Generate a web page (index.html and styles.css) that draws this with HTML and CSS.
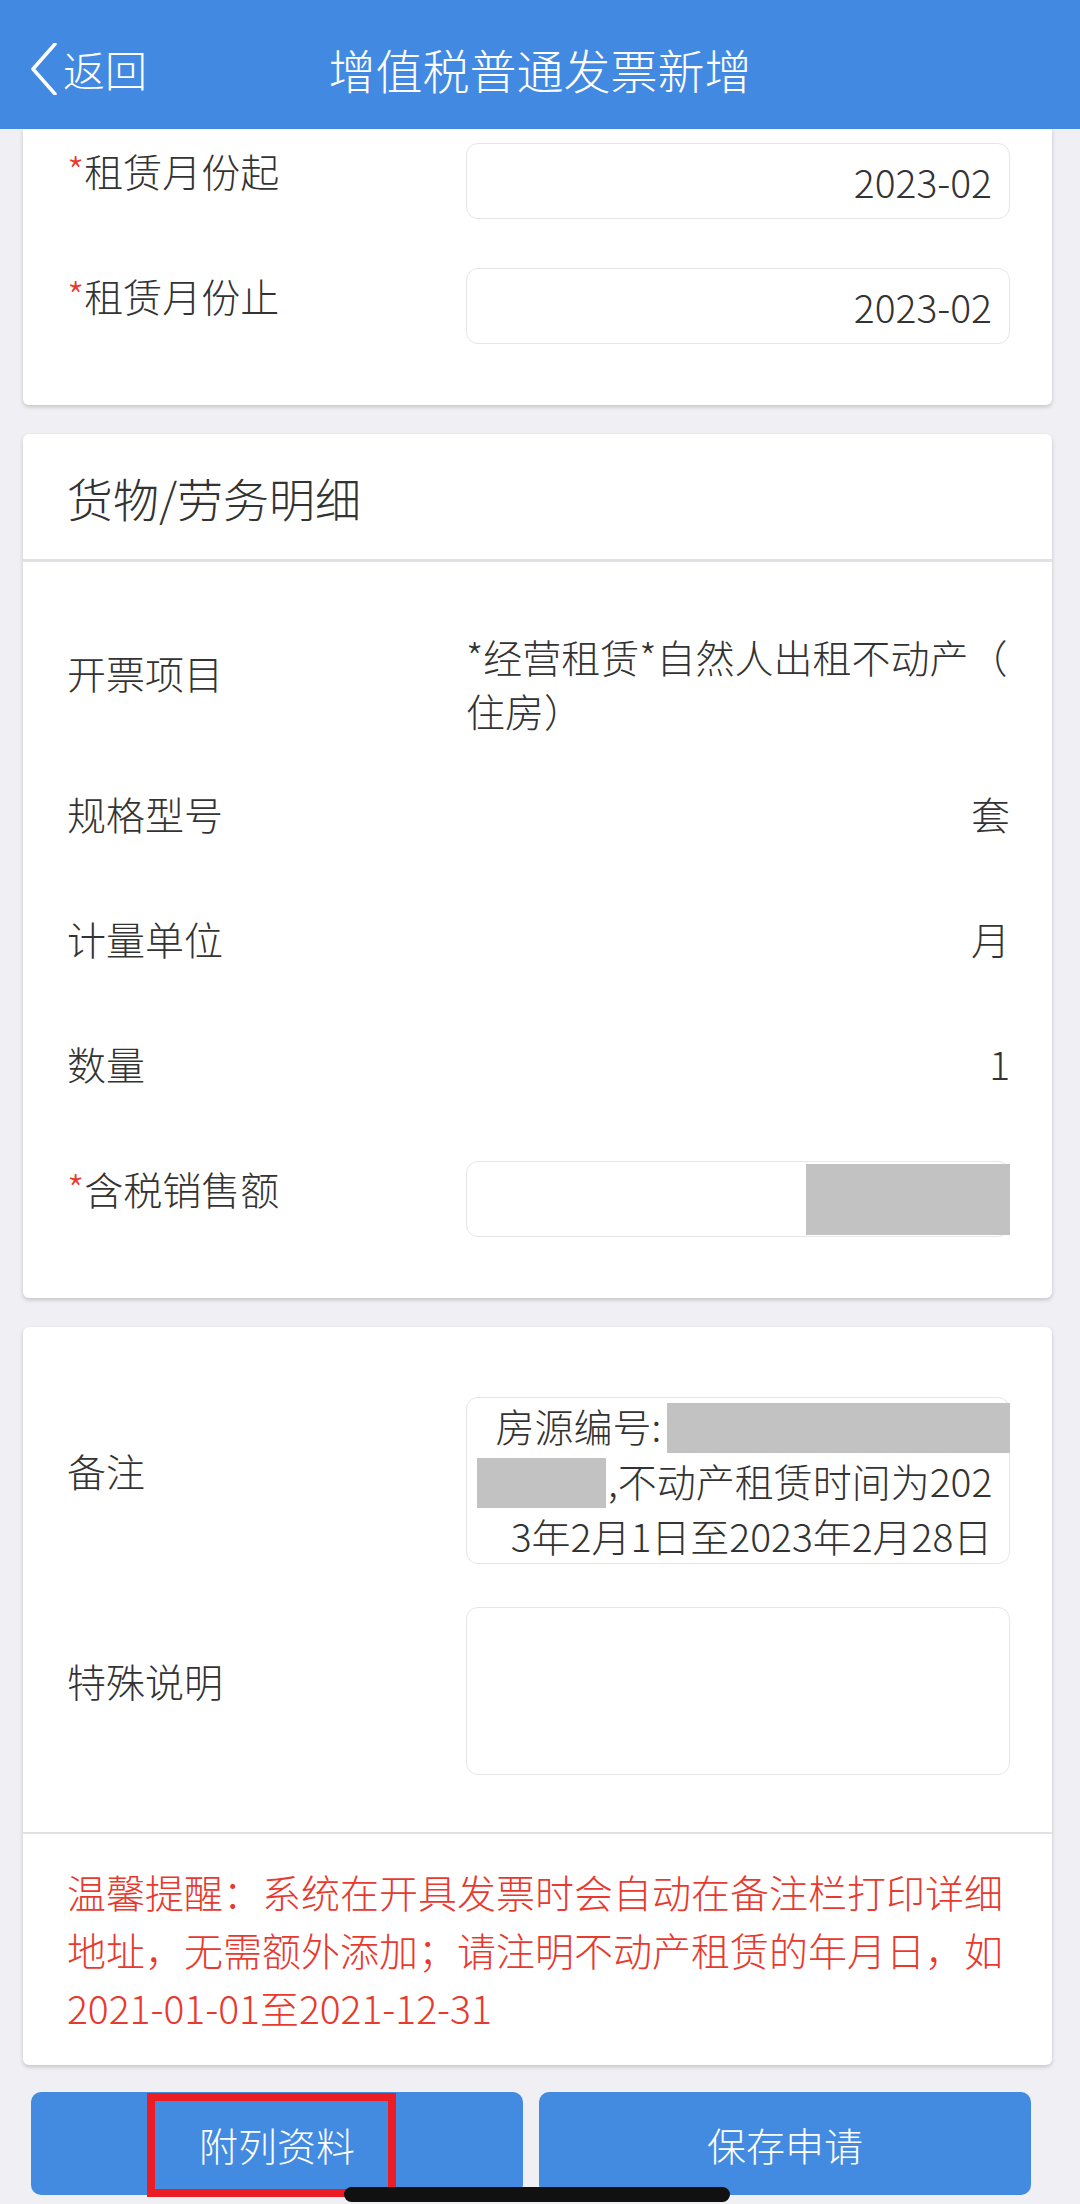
FILE: index.html
```html
<!DOCTYPE html>
<html lang="zh-CN">
<head>
    <meta charset="UTF-8">
    <meta name="viewport" content="width=device-width, initial-scale=1.0">
    <title>增值税普通发票新增</title>
    <link rel="stylesheet" href="styles.css">
</head>
<body>

    <header class="nav-bar">
        <a class="nav-back" href="#">
            <svg viewBox="0 0 26 52"><polyline points="24,1 2,26 24,51" fill="none" stroke="#fff" stroke-width="3.5" stroke-linecap="round" stroke-linejoin="round"/></svg>
            <span>返回</span>
        </a>
        <h1 class="nav-title">增值税普通发票新增</h1>
        <span></span>
    </header>

    <main class="page">
        <section class="card card-top">
            <div class="card-body">
                <div class="row">
                    <span class="cell label"><em class="req">*</em>租赁月份起</span>
                    <div class="field">2023-02</div>
                </div>
                <div class="row">
                    <span class="cell label"><em class="req">*</em>租赁月份止</span>
                    <div class="field">2023-02</div>
                </div>
            </div>
        </section>

        <section class="card">
            <div class="card-head">货物/劳务明细</div>
            <div class="card-body card-body-goods">
                <div class="row">
                    <span class="cell label">开票项目</span>
                    <div class="value-wrap">*经营租赁*自然人出租不动产（<br>住房）</div>
                </div>
                <div class="row">
                    <span class="cell label">规格型号</span>
                    <span class="cell value">套</span>
                </div>
                <div class="row">
                    <span class="cell label">计量单位</span>
                    <span class="cell value">月</span>
                </div>
                <div class="row">
                    <span class="cell label">数量</span>
                    <span class="cell value">1</span>
                </div>
                <div class="row">
                    <span class="cell label"><em class="req">*</em>含税销售额</span>
                    <div class="field"><span class="mask mask-amount"></span></div>
                </div>
            </div>
        </section>

        <section class="card">
            <div class="card-body card-body-notes">
                <div class="row">
                    <span class="cell label">备注</span>
                    <div class="field field-area">
                        <div>房源编号:<span class="mask mask-id"></span></div>
                        <div><span class="mask mask-id2"></span>,不动产租赁时间为202</div>
                        <div>3年2月1日至2023年2月28日</div>
                    </div>
                </div>
                <div class="row">
                    <span class="cell label">特殊说明</span>
                    <div class="field field-area field-empty"></div>
                </div>
            </div>
            <p class="tip">温馨提醒：系统在开具发票时会自动在备注栏打印详细地址，无需额外添加；请注明不动产租赁的年月日，如2021-01-01至2021-12-31</p>
        </section>

        <div class="actions">
            <button class="btn">附列资料</button>
            <button class="btn">保存申请</button>
        </div>
    </main>

    <div class="highlight"></div>
    <div class="home-bar"></div>

</body>
</html>
```

FILE: styles.css
```css
body {
    margin: 0;
    width: 1080px;
    height: 2204px;
    overflow: hidden;
    position: relative;
    background-color: #efeff4;
    font-family: "Noto Sans CJK SC", sans-serif;
    font-size: 39px;
    font-weight: 300;
    color: #333;
}

.nav-bar {
    height: 129px;
    box-sizing: border-box;
    padding-top: 8px;
    background-color: #428ae1;
    color: #fff;
    display: grid;
    grid-template-columns: 1fr auto 1fr;
    align-items: center;
}

.nav-back {
    display: flex;
    align-items: center;
    gap: 6px;
    padding-left: 31px;
    color: #fff;
    text-decoration: none;
    font-size: 42px;
}

.nav-back svg {
    width: 26px;
    height: 52px;
}

.nav-title {
    margin: 0;
    font-size: 47px;
    font-weight: 300;
}

.card {
    background-color: #fff;
    margin: 0 28px 0 23px;
    border-radius: 6px;
    box-shadow: 0 2px 4px rgba(0, 0, 0, 0.18);
}

.card + .card {
    margin-top: 29px;
}

.card-top {
    border-radius: 0 0 6px 6px;
}

.card-head {
    height: 125px;
    display: flex;
    align-items: center;
    padding-left: 44px;
    font-size: 46px;
    border-bottom: 3px solid #e2e2e6;
}

.card-body {
    display: flex;
    flex-direction: column;
    gap: 49px;
    padding: 14px 42px 61px 44px;
}

.card-body-goods {
    padding-top: 67px;
}

.card-body-notes {
    padding-top: 70px;
    padding-bottom: 57px;
    gap: 43px;
    border-bottom: 2px solid #e2e2e6;
}

.row {
    display: flex;
    align-items: center;
}

.cell {
    line-height: 54px;
    padding-bottom: 22px;
}

.label {
    flex: 0 0 399px;
}

.value {
    flex: 1;
    text-align: right;
}

.value-wrap {
    flex: 1;
    line-height: 54px;
    white-space: nowrap;
}

.req {
    font-style: normal;
    color: #e8392e;
}

.field {
    flex: 1;
    height: 76px;
    box-sizing: border-box;
    border: 1px solid #e6e6e8;
    border-radius: 12px;
    display: flex;
    align-items: center;
    justify-content: flex-end;
    padding-right: 17px;
}

.field-area {
    display: block;
    height: 167px;
    padding: 0 17px 0 10px;
    line-height: 55px;
    text-align: right;
    white-space: nowrap;
}

.field-empty {
    height: 168px;
}

.mask {
    display: inline-block;
    vertical-align: top;
    background-color: #c2c2c2;
}

.mask-amount {
    width: 204px;
    height: 71px;
    margin-right: -18px;
}

.mask-id {
    width: 343px;
    height: 50px;
    margin: 5px -18px 0 6px;
}

.mask-id2 {
    width: 129px;
    height: 50px;
    margin: 5px 2px 0 0;
}

.tip {
    margin: 0;
    padding: 28px 42px 29px 44px;
    color: #e8392e;
    line-height: 58px;
}

.actions {
    display: grid;
    grid-template-columns: 1fr 1fr;
    gap: 16px;
    margin: 27px 49px 0 31px;
}

.btn {
    height: 103px;
    border: none;
    border-radius: 10px;
    background-color: #438be1;
    color: #fff;
    font-family: inherit;
    font-size: 39px;
    font-weight: 300;
}

.highlight {
    position: absolute;
    left: 147px;
    top: 2093px;
    width: 249px;
    height: 104px;
    box-sizing: border-box;
    border: 8px solid #ec1c24;
}

.home-bar {
    position: absolute;
    left: 344px;
    top: 2187px;
    width: 386px;
    height: 15px;
    border-radius: 8px;
    background-color: #111;
}
```
